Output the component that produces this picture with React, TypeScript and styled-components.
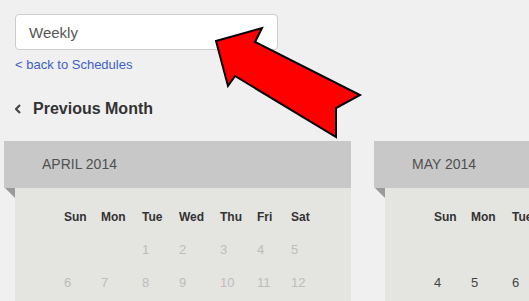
import styled, { createGlobalStyle } from "styled-components";

const GlobalStyle = createGlobalStyle`
  html, body {
    margin: 0;
    padding: 0;
    overflow: hidden;
    background: #f0f0f0;
    font-family: "Liberation Sans", Arial, sans-serif;
  }
`;

const Page = styled.div`
  position: relative;
  padding: 14px 15px 0;
`;

const SelectBox = styled.div`
  box-sizing: border-box;
  width: 263px;
  height: 36px;
  padding: 0 13px;
  display: flex;
  align-items: center;
  background: #fff;
  border: 1px solid #ccc;
  border-radius: 4px;
  font-size: 15px;
  color: #555;
`;

const BackLink = styled.a`
  display: block;
  margin-top: 7px;
  font-size: 13px;
  line-height: 15px;
  color: #3d5fc9;
  text-decoration: none;
`;

const PrevMonth = styled.div`
  display: flex;
  align-items: center;
  gap: 12px;
  margin-top: 28px;
  font-size: 16px;
  line-height: 18px;
  font-weight: bold;
  color: #333;
`;

const CalendarRow = styled.div`
  display: flex;
  gap: 23px;
  margin: 23px 0 0 -11px;
`;

const Calendar = styled.div`
  flex-shrink: 0;
  width: 347px;
`;

const CalendarHeader = styled.div`
  height: 47px;
  padding-left: 38px;
  background: #c8c8c8;
  font-size: 14px;
  line-height: 47px;
  color: #505050;
`;

const CalendarBody = styled.div`
  position: relative;
  margin-left: 11px;
  padding: 12px 0 20px 49px;
  background: #e4e4e0;

  &::before {
    content: "";
    position: absolute;
    left: -10px;
    top: 0;
    width: 0;
    height: 0;
    border-top: 10px solid #9a9a9a;
    border-left: 10px solid transparent;
  }
`;

const DayGrid = styled.div`
  display: grid;
  grid-template-columns: 37px 41px 37px 41px 37px 34px 40px;
  grid-auto-rows: 33px;
  align-items: center;
`;

const DayName = styled.div`
  font-size: 12px;
  font-weight: bold;
  color: #333;
`;

const DateCell = styled.div<{ $past: boolean }>`
  font-size: 13px;
  color: ${(p) => (p.$past ? "#bdbdbd" : "#444")};
`;

const Arrow = styled.svg`
  position: absolute;
  left: 200px;
  top: 20px;
  pointer-events: none;
`;

const dayNames = ["Sun", "Mon", "Tue", "Wed", "Thu", "Fri", "Sat"];

const months = [
  { title: "APRIL 2014", start: 2, days: 30, past: true },
  { title: "MAY 2014", start: 4, days: 31, past: false },
];

function MonthCalendar({ title, start, days, past }: (typeof months)[number]) {
  const cells: (number | null)[] = [];
  for (let i = 0; i < start; i++) cells.push(null);
  for (let d = 1; d <= days; d++) cells.push(d);

  return (
    <Calendar>
      <CalendarHeader>{title}</CalendarHeader>
      <CalendarBody>
        <DayGrid>
          {dayNames.map((d) => (
            <DayName key={d}>{d}</DayName>
          ))}
          {cells.map((d, i) => (
            <DateCell key={i} $past={past}>
              {d ?? ""}
            </DateCell>
          ))}
        </DayGrid>
      </CalendarBody>
    </Calendar>
  );
}

export default function App() {
  return (
    <>
      <GlobalStyle />
      <Page>
        <SelectBox>Weekly</SelectBox>
        <BackLink href="#">&lt; back to Schedules</BackLink>
        <PrevMonth>
          <svg width="6" height="10" viewBox="0 0 6 10">
            <polyline
              points="5,1 1,5 5,9"
              fill="none"
              stroke="#444"
              strokeWidth="2.2"
            />
          </svg>
          Previous Month
        </PrevMonth>
        <CalendarRow>
          {months.map((m) => (
            <MonthCalendar key={m.title} {...m} />
          ))}
        </CalendarRow>
        <Arrow width="170" height="125" viewBox="200 20 170 125">
          <polygon
            points="216,41 262,28 255,42 360,95 336,108 336,137 235,76 228,86"
            fill="#ff0000"
            stroke="#000"
            strokeWidth="2"
            strokeLinejoin="miter"
          />
        </Arrow>
      </Page>
    </>
  );
}
